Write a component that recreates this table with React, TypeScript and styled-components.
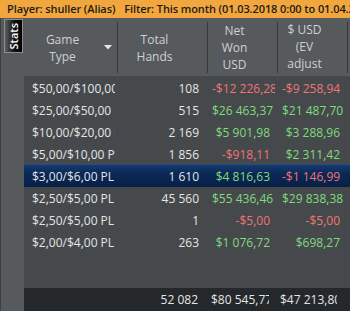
import React from "react";
import styled, { createGlobalStyle } from "styled-components";

const GlobalStyle = createGlobalStyle`
  html, body { margin: 0; padding: 0; background: #46494c; overflow: hidden; }
  #root { width: 350px; height: 311px; }
`;

const FONT = `"Open Sans", "DejaVu Sans", sans-serif`;
const COLS = "94px 90px 70px 70px 2px";

const Window = styled.div`
  width: 350px;
  height: 311px;
  display: flex;
  flex-direction: column;
  font-family: ${FONT};
  overflow: hidden;
`;

const FilterBar = styled.div`
  height: 18px;
  flex: none;
  background: #f1a73e;
  color: #1b1b1b;
  font-size: 11px;
  font-weight: 600;
  letter-spacing: -0.1px;
  line-height: 18px;
  display: flex;
  align-items: center;
  gap: 9px;
  padding-left: 7px;
  white-space: nowrap;
  overflow: hidden;
`;

const Main = styled.div`
  flex: 1;
  display: flex;
  min-height: 0;
`;

const SideRail = styled.div`
  width: 24px;
  flex: none;
  box-sizing: border-box;
  background: #565a5d;
  border-left: 1px solid #3c4043;
  padding: 1px 0 0 3px;
`;

const StatsTab = styled.div`
  width: 19px;
  height: 34px;
  box-sizing: border-box;
  border: 1px solid #8d8d8d;
  background: linear-gradient(to right, #5e5e5e, #111 55%, #000);
  display: flex;
  align-items: center;
  justify-content: center;
`;

const StatsLabel = styled.span`
  writing-mode: vertical-rl;
  transform: rotate(180deg);
  color: #fff;
  font-size: 11px;
  font-weight: 600;
  line-height: 17px;
`;

const Table = styled.div`
  flex: 1;
  display: flex;
  flex-direction: column;
  min-width: 0;
`;

const HeaderRow = styled.div`
  height: 58px;
  flex: none;
  box-sizing: border-box;
  background: #565a5d;
  display: grid;
  grid-template-columns: ${COLS};
  padding: 4px 0 3px;
`;

const HeaderCell = styled.div`
  display: grid;
  grid-template-columns: 1fr 18px;
  align-items: center;
  border-right: 1px solid #36393c;
  color: #cfd0d1;
  font-size: 12px;
  line-height: 17px;
  text-align: center;
  overflow: hidden;
  padding-left: 2px;
`;

const HeaderTitle = styled.div<{ $lift?: number }>`
  white-space: nowrap;
  margin-top: ${(p) => -(p.$lift ?? 0)}px;
`;

const SortSlot = styled.div`
  display: flex;
  align-items: center;
  justify-content: center;
`;

const Body = styled.div`
  flex: 1;
  background: #46494c;
`;

const Row = styled.div<{ $selected?: boolean }>`
  display: grid;
  grid-template-columns: ${COLS};
  height: 23px;
  box-sizing: border-box;
  align-items: center;
  font-size: 12px;
  line-height: 23px;
  background: ${(p) =>
    p.$selected ? "linear-gradient(to bottom, #143a70, #0b2855 40%, #072048)" : "transparent"};
  border-top: 1px solid ${(p) => (p.$selected ? "#2c4c7c" : "transparent")};
  margin-top: -1px;
  &:first-child { margin-top: 0; }
`;

const TextCell = styled.div`
  overflow: hidden;
  white-space: nowrap;
  padding-left: 8px;
  margin-right: 3px;
  color: #e4e5e6;
`;

const NumCell = styled.div<{ $tone?: "pos" | "neg" | "plain"; $pl?: number; $clip?: number }>`
  overflow: hidden;
  white-space: nowrap;
  padding-left: ${(p) => p.$pl ?? 4}px;
  margin-right: ${(p) => p.$clip ?? 3}px;
  color: ${(p) => (p.$tone === "pos" ? "#80db7d" : p.$tone === "neg" ? "#ef7474" : "#e4e5e6")};
`;

const NumValue = styled.span<{ $pr?: number }>`
  display: block;
  text-align: right;
  padding-right: ${(p) => p.$pr ?? 5}px;
`;

const Footer = styled.div`
  height: 23px;
  flex: none;
  background: #25282a;
  display: grid;
  grid-template-columns: ${COLS};
  align-items: center;
  font-size: 12px;
  line-height: 23px;
`;

const SortArrow = () => (
  <svg width="8" height="5" viewBox="0 0 8 5">
    <polygon points="0,0 8,0 4,4.5" fill="#e6e6e6" />
  </svg>
);

type RowData = { game: string; hands: string; net: string; ev: string; sel?: boolean };

const rows: RowData[] = [
  { game: "$50,00/$100,00 PL", hands: "108", net: "-$12 226,28", ev: "-$9 258,94" },
  { game: "$25,00/$50,00 PL", hands: "515", net: "$26 463,37", ev: "$21 487,70" },
  { game: "$10,00/$20,00 PL", hands: "2 169", net: "$5 901,98", ev: "$3 288,96" },
  { game: "$5,00/$10,00 PL", hands: "1 856", net: "-$918,11", ev: "$2 311,42" },
  { game: "$3,00/$6,00 PL", hands: "1 610", net: "$4 816,63", ev: "-$1 146,99", sel: true },
  { game: "$2,50/$5,00 PL", hands: "45 560", net: "$55 436,46", ev: "$29 838,38" },
  { game: "$2,50/$5,00 PL", hands: "1", net: "-$5,00", ev: "-$5,00" },
  { game: "$2,00/$4,00 PL", hands: "263", net: "$1 076,72", ev: "$698,27" },
];

const tone = (v: string) => (v.startsWith("-") ? "neg" : "pos");

export default function App() {
  return (
    <>
      <GlobalStyle />
      <Window>
        <FilterBar>
          <span>Player: shuller (Alias)</span>
          <span>Filter: This month (01.03.2018 0:00 to 01.04.2018 0:00)</span>
        </FilterBar>
        <Main>
          <SideRail>
            <StatsTab>
              <StatsLabel>Stats</StatsLabel>
            </StatsTab>
          </SideRail>
          <Table>
            <HeaderRow>
              <HeaderCell>
                <HeaderTitle>
                  Game
                  <br />
                  Type
                </HeaderTitle>
                <SortSlot>
                  <SortArrow />
                </SortSlot>
              </HeaderCell>
              <HeaderCell>
                <HeaderTitle>
                  Total
                  <br />
                  Hands
                </HeaderTitle>
                <SortSlot />
              </HeaderCell>
              <HeaderCell>
                <HeaderTitle>
                  Net
                  <br />
                  Won
                  <br />
                  USD
                </HeaderTitle>
                <SortSlot />
              </HeaderCell>
              <HeaderCell>
                <HeaderTitle $lift={3}>
                  $ USD
                  <br />
                  (EV
                  <br />
                  adjust
                </HeaderTitle>
                <SortSlot />
              </HeaderCell>
            </HeaderRow>
            <Body>
              {rows.map((r, i) => (
                <Row key={i} $selected={r.sel}>
                  <TextCell>{r.game}</TextCell>
                  <NumCell $tone="plain">
                    <NumValue $pr={6}>{r.hands}</NumValue>
                  </NumCell>
                  <NumCell $tone={tone(r.net)}>
                    <NumValue>{r.net}</NumValue>
                  </NumCell>
                  <NumCell $tone={tone(r.ev)}>
                    <NumValue>{r.ev}</NumValue>
                  </NumCell>
                </Row>
              ))}
            </Body>
            <Footer>
              <span />
              <NumCell $tone="plain">
                <NumValue $pr={7}>52 082</NumValue>
              </NumCell>
              <NumCell $tone="plain" $pl={3} $clip={9}>
                <NumValue $pr={0}>$80 545,77</NumValue>
              </NumCell>
              <NumCell $tone="plain" $pl={2} $clip={11}>
                <NumValue $pr={0}>$47 213,80</NumValue>
              </NumCell>
            </Footer>
          </Table>
        </Main>
      </Window>
    </>
  );
}
